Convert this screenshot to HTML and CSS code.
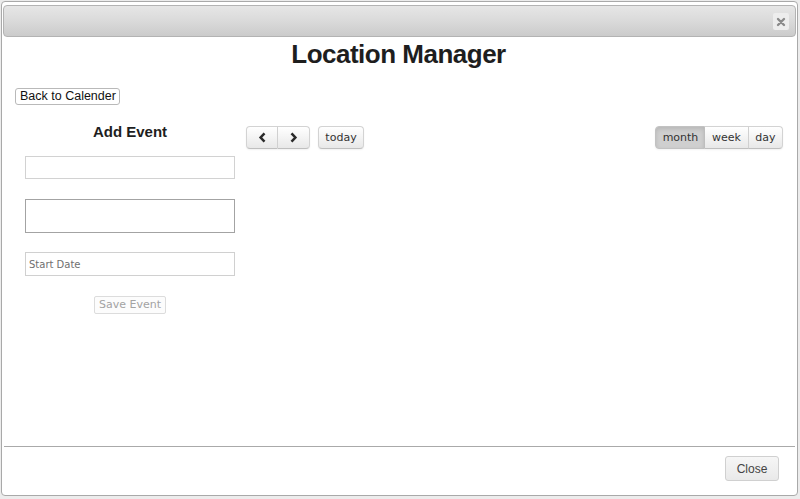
FILE: index.html
```html
<!DOCTYPE html>
<html>
<head>
<meta charset="utf-8">
<title>Location Manager</title>
<link rel="stylesheet" href="styles.css">
</head>
<body>
<div class="dialog">
  <div class="titlebar">
    <span class="title-text"></span>
    <button class="x-close" type="button" aria-label="close">
      <svg width="10" height="10" viewBox="0 0 10 10"><path d="M2 2 L8 8 M8 2 L2 8" stroke="#8a8a8a" stroke-width="2.4" stroke-linecap="round"/></svg>
    </button>
  </div>
  <div class="content">
    <h1 class="heading">Location Manager</h1>
    <div class="back-row"><button class="back-btn" type="button">Back to Calender</button></div>
    <div class="main">
      <div class="add-event">
        <h2 class="add-title">Add Event</h2>
        <input class="field field-1" type="text">
        <textarea class="field field-2"></textarea>
        <input class="field field-3" type="text" placeholder="Start Date">
        <button class="save-btn" type="button" disabled>Save Event</button>
      </div>
      <div class="calendar">
        <div class="toolbar">
          <div class="left-tools">
            <div class="group">
              <button class="fc-btn nav" type="button" aria-label="prev">
                <svg width="9" height="11" viewBox="0 0 9 11"><path d="M6.5 1.3 L2.6 5.5 L6.5 9.7" fill="none" stroke="#2a2a2a" stroke-width="2.5"/></svg>
              </button>
              <button class="fc-btn nav" type="button" aria-label="next">
                <svg width="9" height="11" viewBox="0 0 9 11"><path d="M2.5 1.3 L6.4 5.5 L2.5 9.7" fill="none" stroke="#2a2a2a" stroke-width="2.5"/></svg>
              </button>
            </div>
            <button class="fc-btn single" type="button">today</button>
          </div>
          <div class="group">
            <button class="fc-btn active" type="button">month</button>
            <button class="fc-btn" type="button">week</button>
            <button class="fc-btn" type="button">day</button>
          </div>
        </div>
      </div>
    </div>
  </div>
  <div class="footer">
    <button class="close-btn" type="button">Close</button>
  </div>
</div>
</body>
</html>
```

FILE: styles.css
```css
* { box-sizing: border-box; }
html, body { margin: 0; padding: 0; }
body {
  background: #ececec;
  width: 800px;
  height: 499px;
  overflow: hidden;
  font-family: "Liberation Sans", Arial, sans-serif;
}
.dialog {
  margin: 1px 0 0 1px;
  width: 797px;
  height: 495px;
  background: #fff;
  border: 1px solid #a9a9a9;
  border-radius: 4px;
  padding: 3px 1px 0 1px;
  display: flex;
  flex-direction: column;
}
.titlebar {
  height: 32px;
  flex: none;
  border: 1px solid #b3b3b3;
  border-radius: 4px;
  background: linear-gradient(to bottom, #e6e6e6 0%, #dadada 50%, #cbcbcb 100%);
  display: flex;
  align-items: center;
  justify-content: space-between;
  padding: 0 6px 0 8px;
}
.x-close {
  width: 16px;
  height: 17px;
  padding: 0;
  margin-top: 1px;
  border: none;
  border-radius: 2px;
  background: #ededed;
  display: flex;
  align-items: center;
  justify-content: center;
}
.content {
  flex: 1;
  display: flex;
  flex-direction: column;
  padding: 0 13px 0 11px;
}
.heading {
  margin: 2px 0 0;
  text-align: center;
  font-size: 26px;
  line-height: 30px;
  font-weight: bold;
  letter-spacing: -0.5px;
  color: #1e1e1e;
}
.back-row { margin-top: 19px; display: flex; padding-left: 1px; }
.back-btn {
  font-family: "Liberation Sans", Arial, sans-serif;
  font-size: 12.5px;
  height: 17px;
  line-height: 15px;
  padding: 0 3px 0 4px;
  border: 1px solid #b9b9b9;
  border-radius: 3px;
  background: #fff;
  color: #111;
}
.main {
  display: flex;
  margin-top: 18px;
}
.add-event {
  width: 232px;
  flex: none;
  display: flex;
  flex-direction: column;
  align-items: center;
}
.add-title {
  margin: 0;
  font-size: 15px;
  line-height: 18px;
  font-weight: bold;
  color: #1e1e1e;
}
.field {
  display: block;
  width: 210px;
  margin: 0;
  background: #fff;
  font-family: "DejaVu Sans", Verdana, sans-serif;
  font-size: 10px;
  padding: 0 3px;
  outline: none;
  resize: none;
}
.field-1 {
  margin-top: 15px;
  height: 23px;
  border: 1px solid #d2d2d2;
}
.field-2 {
  margin-top: 20px;
  height: 34px;
  border: 1px solid #a3a3a3;
}
.field-3 {
  margin-top: 19px;
  height: 24px;
  border: 1px solid #d0d0d0;
}
.field-3::placeholder { color: #6f6f6f; }
.save-btn {
  margin-top: 20px;
  height: 18px;
  padding: 0 4px;
  font-family: "DejaVu Sans", Verdana, sans-serif;
  font-size: 11px;
  line-height: 16px;
  color: #a3a3a3;
  background: #fcfcfc;
  border: 1px solid #dcdcdc;
  border-radius: 2px;
}
.calendar {
  flex: 1;
  padding-top: 3px;
}
.toolbar {
  display: flex;
  justify-content: space-between;
  align-items: flex-start;
}
.left-tools { display: flex; gap: 8px; }
.group { display: flex; }
.fc-btn {
  height: 23px;
  margin: 0;
  padding: 0 0.6em;
  font-family: "DejaVu Sans", Verdana, sans-serif;
  font-size: 11px;
  color: #333;
  background: linear-gradient(to bottom, #ffffff 0%, #e8e8e8 100%);
  border: 1px solid #d3d3d3;
  border-bottom-color: #bfbfbf;
  border-left-width: 0;
  box-shadow: inset 0 1px 0 rgba(255,255,255,0.3), 0 1px 2px rgba(0,0,0,0.06);
  display: flex;
  align-items: center;
  justify-content: center;
}
.group .fc-btn:first-child {
  border-left-width: 1px;
  border-radius: 4px 0 0 4px;
}
.group .fc-btn:last-child { border-radius: 0 4px 4px 0; }
.fc-btn.single {
  border-left-width: 1px;
  border-radius: 4px;
  width: 46px;
}
.fc-btn.nav { width: 32px; padding: 0; }
.fc-btn.active {
  background: #cfcfcf;
  border-color: #c2c2c2;
  box-shadow: inset 0 2px 4px rgba(0,0,0,0.12), 0 1px 2px rgba(0,0,0,0.05);
  width: 50px;
}
.footer {
  flex: none;
  height: 49px;
  margin: 0 1px;
  border-top: 1px solid #aaaaaa;
  display: flex;
  justify-content: flex-end;
  align-items: flex-start;
  padding: 9px 16px 0 0;
}
.close-btn {
  width: 54px;
  height: 25px;
  font-family: "Liberation Sans", Arial, sans-serif;
  font-size: 12px;
  color: #444;
  background: linear-gradient(to bottom, #f6f6f6 0%, #e9e9e9 100%);
  border: 1px solid #d0d0d0;
  border-radius: 3px;
  padding: 0;
}
```
